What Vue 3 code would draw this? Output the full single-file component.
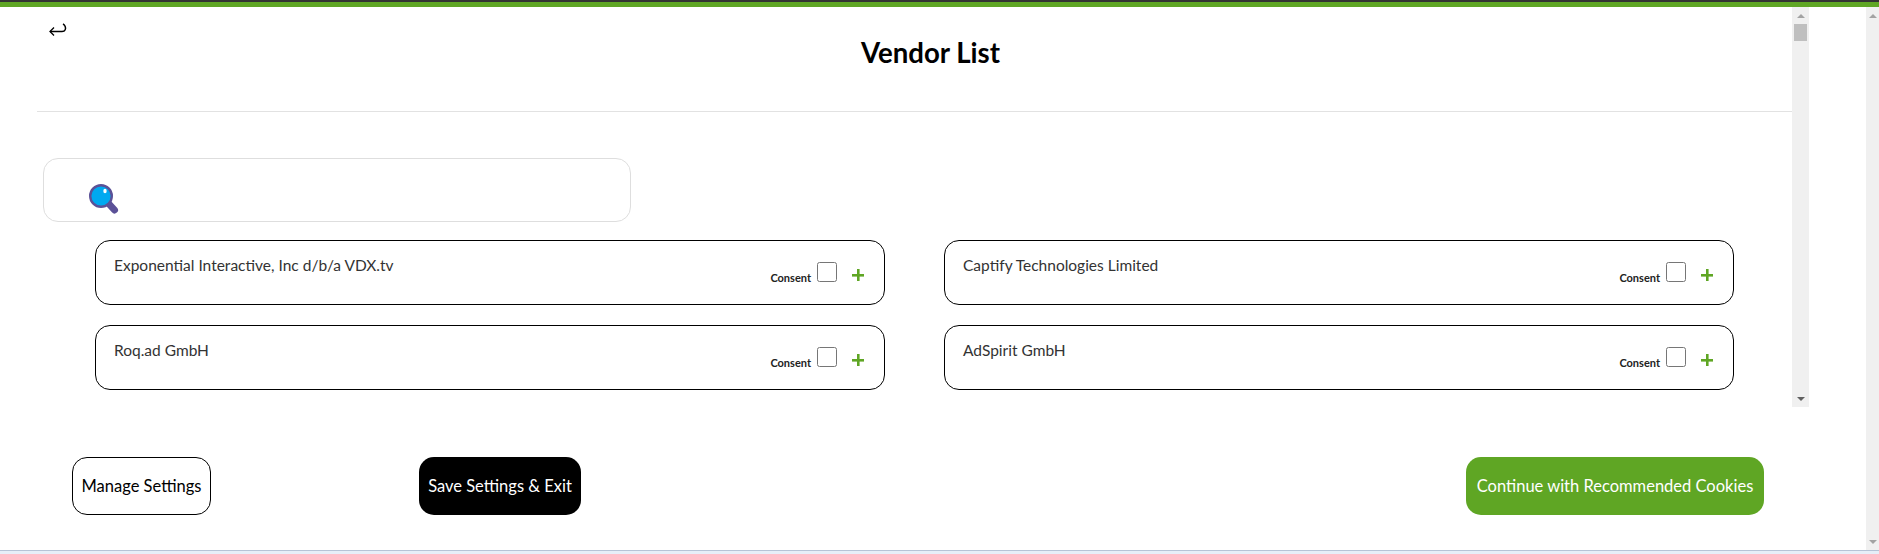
<script setup>
const vendors = [
  { name: 'Exponential Interactive, Inc d/b/a VDX.tv' },
  { name: 'Captify Technologies Limited' },
  { name: 'Roq.ad GmbH' },
  { name: 'AdSpirit GmbH' },
]
</script>

<template>
  <div class="page">
    <div class="topbar"></div>
    <div class="middle">
      <main class="main">
        <div class="panel">
          <div class="scroller">
            <header class="head">
              <svg class="back" width="18" height="14" viewBox="0 0 18 14" fill="none" stroke="#000">
                <path d="M1 8.5H13C16.5 8.5 17 5.5 16.2 3.5C15.8 2.5 15 1.5 14 1" stroke-width="1.5" />
                <path d="M5 4.5L1 8.5L5 12.5" stroke-width="1.3" />
              </svg>
              <h1 class="title">Vendor List</h1>
            </header>
            <div class="search">
              <svg width="32" height="32" viewBox="0 0 32 32">
                <path d="M21 20L26.5 26" stroke="#5b5197" stroke-width="7" stroke-linecap="round" />
                <circle cx="13" cy="12" r="10.8" fill="#00a9f0" stroke="#5b5197" stroke-width="2.4" />
                <ellipse cx="17" cy="7" rx="1.7" ry="2.2" fill="#fff" />
              </svg>
            </div>
            <div class="grid">
              <div v-for="v in vendors" :key="v.name" class="card">
                <span class="name">{{ v.name }}</span>
                <div class="actions">
                  <span class="consent">Consent</span>
                  <input class="check" type="checkbox" />
                  <span class="plus"></span>
                </div>
              </div>
            </div>
          </div>
          <div class="bar inner">
            <span class="arrow up"></span>
            <span class="thumb"></span>
            <span class="arrow down"></span>
          </div>
        </div>
        <footer class="foot">
          <button class="btn outline">Manage Settings</button>
          <button class="btn dark">Save Settings &amp; Exit</button>
          <button class="btn green">Continue with Recommended Cookies</button>
        </footer>
      </main>
      <div class="bar outer">
        <span class="arrow up"></span>
        <span class="arrow down"></span>
      </div>
    </div>
    <div class="strip"></div>
  </div>
</template>

<style>
html, body { margin: 0; overflow: hidden; background: #fff; }
</style>

<style scoped>
.page {
  width: 1879px;
  height: 554px;
  display: flex;
  flex-direction: column;
  font-family: "Lato", "Open Sans", sans-serif;
  color: #000;
  background: #fff;
}
.topbar {
  height: 5px;
  border-top: 2px solid #333;
  background: #5fa624;
  flex: none;
}
.middle { flex: 1; display: flex; min-height: 0; }
.main { flex: 1; display: flex; flex-direction: column; min-width: 0; }
.panel { display: flex; height: 400px; margin-left: 37px; margin-right: 57px; }
.scroller { flex: 1; min-width: 0; }
.head {
  height: 104px;
  border-bottom: 1px solid #e2e2e2;
  display: flex;
  align-items: flex-start;
  padding-left: 12px;
}
.back { margin-top: 16px; flex: none; }
.title {
  margin: 30px 0 0 794px;
  font-size: 27.6px;
  line-height: 32px;
  font-weight: 700;
  white-space: nowrap;
}
.search {
  width: 542px;
  height: 37px;
  margin: 46px 0 0 6px;
  border: 1px solid #dedede;
  border-radius: 15px;
  display: flex;
  padding-left: 44px;
  padding-top: 25px;
}
.grid {
  display: grid;
  grid-template-columns: 790px 790px;
  column-gap: 59px;
  row-gap: 20px;
  margin: 18px 0 0 58px;
}
.card {
  height: 65px;
  box-sizing: border-box;
  border: 1px solid #000;
  border-radius: 15px;
  display: flex;
  justify-content: space-between;
  padding: 14px 20px 0 18px;
}
.name { font-size: 15.5px; line-height: 20px; color: #333; white-space: nowrap; }
.actions { display: flex; align-items: flex-start; padding-top: 7px; }
.consent {
  font-size: 11px;
  font-weight: 700;
  line-height: 14px;
  margin-top: 9px;
  color: #222;
}
.check {
  appearance: auto;
  width: 20px;
  height: 20px;
  margin: 0 0 0 6px;
}
.plus {
  width: 12px;
  height: 12px;
  margin: 7px 0 0 15px;
  background:
    linear-gradient(#5fa624, #5fa624) center / 100% 2.6px no-repeat,
    linear-gradient(#5fa624, #5fa624) center / 2.6px 100% no-repeat;
}
.bar {
  background: #f0f0f0;
  display: flex;
  flex-direction: column;
  align-items: center;
  flex: none;
}
.inner { width: 17px; }
.outer { width: 13px; }
.arrow { width: 0; height: 0; border-left: 4px solid transparent; border-right: 4px solid transparent; flex: none; }
.arrow.up { border-bottom: 4px solid #a3a3a3; margin-top: 7px; }
.arrow.down { border-top: 4px solid #606060; margin-top: auto; margin-bottom: 6px; }
.outer .arrow.down { border-top-color: #a3a3a3; }
.thumb { width: 13px; height: 17px; background: #bfbfbf; margin-top: 6px; flex: none; }
.foot {
  flex: 1;
  display: flex;
  align-items: flex-start;
  padding: 50px 102px 0 72px;
}
.btn {
  height: 58px;
  box-sizing: border-box;
  border-radius: 15px;
  font-family: inherit;
  font-size: 16.5px;
  padding: 0;
  white-space: nowrap;
}
.outline { width: 139px; background: #fff; border: 1px solid #000; color: #000; }
.dark { width: 162px; background: #000; border: 0; color: #fff; margin-left: 208px; }
.green { width: 298px; background: #5fa624; border: 0; color: #fff; margin-left: auto; }
.strip {
  height: 3px;
  flex: none;
  border-top: 1px solid #b6c3d6;
  background: #e6eef8;
}
</style>
